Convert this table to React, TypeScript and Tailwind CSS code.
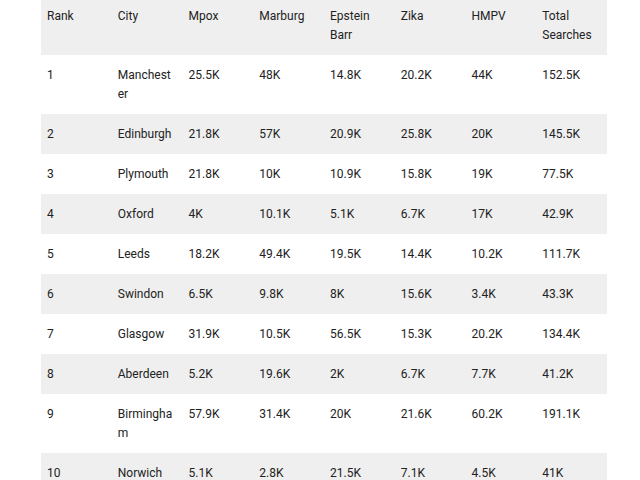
import React from "react";

const header = ["Rank", "City", "Mpox", "Marburg", "Epstein Barr", "Zika", "HMPV", "Total Searches"];
const rows = [
  ["1", "Manchester", "25.5K", "48K", "14.8K", "20.2K", "44K", "152.5K"],
  ["2", "Edinburgh", "21.8K", "57K", "20.9K", "25.8K", "20K", "145.5K"],
  ["3", "Plymouth", "21.8K", "10K", "10.9K", "15.8K", "19K", "77.5K"],
  ["4", "Oxford", "4K", "10.1K", "5.1K", "6.7K", "17K", "42.9K"],
  ["5", "Leeds", "18.2K", "49.4K", "19.5K", "14.4K", "10.2K", "111.7K"],
  ["6", "Swindon", "6.5K", "9.8K", "8K", "15.6K", "3.4K", "43.3K"],
  ["7", "Glasgow", "31.9K", "10.5K", "56.5K", "15.3K", "20.2K", "134.4K"],
  ["8", "Aberdeen", "5.2K", "19.6K", "2K", "6.7K", "7.7K", "41.2K"],
  ["9", "Birmingham", "57.9K", "31.4K", "20K", "21.6K", "60.2K", "191.1K"],
  ["10", "Norwich", "5.1K", "2.8K", "21.5K", "7.1K", "4.5K", "41K"],
];

export default function App() {
  return (
    <div className="w-[640px] h-[480px] overflow-hidden bg-white">
      <div className="pl-[41px] -mt-[4px]">
        <table
          className="table-fixed w-[566px] border-collapse text-[12px] leading-[19px] text-[#222]"
          style={{ fontFamily: "Roboto, 'Noto Sans', sans-serif" }}
        >
          <thead>
            <tr className="bg-[#efefef]">
              {header.map((h) => (
                <th key={h} className="font-normal text-left align-top pl-[6px] pr-[6px] pt-[10.5px] pb-[10.5px] break-words">
                  {h}
                </th>
              ))}
            </tr>
          </thead>
          <tbody>
            {rows.map((r, i) => (
              <tr key={i} className={i % 2 === 1 ? "bg-[#efefef]" : "bg-white"}>
                {r.map((c, j) => (
                  <td key={j} className="align-top pl-[6px] pr-[6px] pt-[10.5px] pb-[10.5px] break-words">
                    {c}
                  </td>
                ))}
              </tr>
            ))}
          </tbody>
        </table>
      </div>
    </div>
  );
}
